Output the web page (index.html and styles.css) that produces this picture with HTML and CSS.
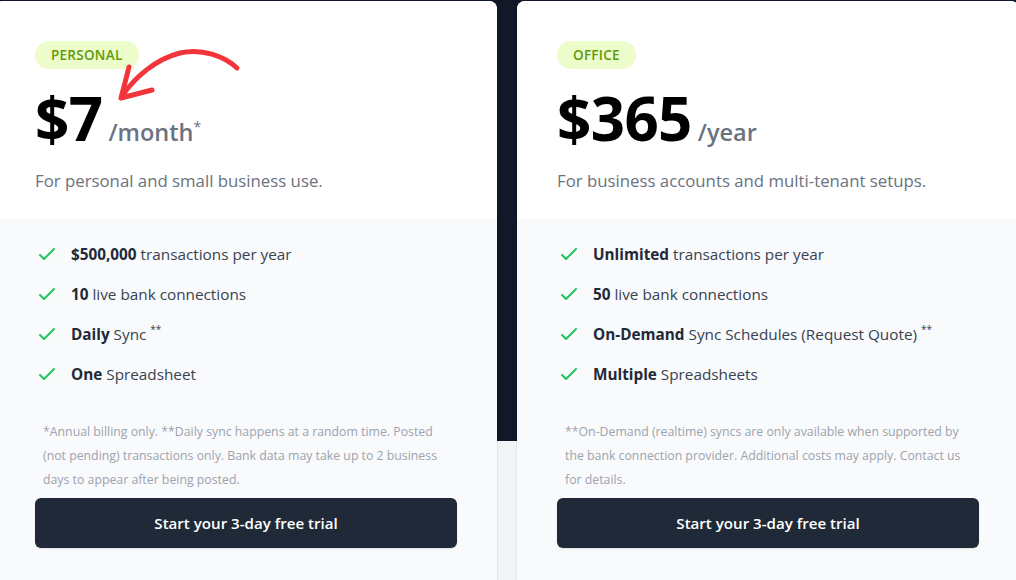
FILE: index.html
```html
<!DOCTYPE html>
<html lang="en">
<head>
<meta charset="utf-8">
<title>Pricing</title>
<link rel="stylesheet" href="styles.css">
</head>
<body>
<div class="plans">
  <section class="card">
    <div class="card-top">
      <span class="badge">Personal</span>
      <div class="price"><span class="amount">$7</span><span class="period">/month<sup>*</sup></span></div>
      <p class="desc">For personal and small business use.</p>
      <svg class="arrow" width="140" height="80" viewBox="0 0 140 80" aria-hidden="true">
        <path d="M135 35 C 122 23, 100 15, 78 20 C 54 26, 33 44, 20 63" fill="none" stroke="#f3343b" stroke-width="5" stroke-linecap="round"/>
        <path d="M27 34 L 19 65 L 50 57" fill="none" stroke="#f3343b" stroke-width="5" stroke-linecap="round" stroke-linejoin="round"/>
      </svg>
    </div>
    <div class="card-bottom">
      <ul class="features">
        <li><svg class="check" viewBox="0 0 24 24"><path d="M5 13l4 4L19 7"/></svg><span><b>$500,000</b> transactions per year</span></li>
        <li><svg class="check" viewBox="0 0 24 24"><path d="M5 13l4 4L19 7"/></svg><span><b>10</b> live bank connections</span></li>
        <li><svg class="check" viewBox="0 0 24 24"><path d="M5 13l4 4L19 7"/></svg><span><b>Daily</b> Sync <sup>**</sup></span></li>
        <li><svg class="check" viewBox="0 0 24 24"><path d="M5 13l4 4L19 7"/></svg><span><b>One</b> Spreadsheet</span></li>
      </ul>
      <p class="note">*Annual billing only. **Daily sync happens at a random time. Posted (not pending) transactions only. Bank data may take up to 2 business days to appear after being posted.</p>
      <a class="cta" href="#">Start your 3-day free trial</a>
    </div>
  </section>
  <section class="card">
    <div class="card-top">
      <span class="badge">Office</span>
      <div class="price"><span class="amount">$365</span><span class="period">/year</span></div>
      <p class="desc">For business accounts and multi-tenant setups.</p>
    </div>
    <div class="card-bottom">
      <ul class="features">
        <li><svg class="check" viewBox="0 0 24 24"><path d="M5 13l4 4L19 7"/></svg><span><b>Unlimited</b> transactions per year</span></li>
        <li><svg class="check" viewBox="0 0 24 24"><path d="M5 13l4 4L19 7"/></svg><span><b>50</b> live bank connections</span></li>
        <li><svg class="check" viewBox="0 0 24 24"><path d="M5 13l4 4L19 7"/></svg><span><b>On-Demand</b> Sync Schedules (Request Quote) <sup>**</sup></span></li>
        <li><svg class="check" viewBox="0 0 24 24"><path d="M5 13l4 4L19 7"/></svg><span><b>Multiple</b> Spreadsheets</span></li>
      </ul>
      <p class="note">**On-Demand (realtime) syncs are only available when supported by the bank connection provider. Additional costs may apply. Contact us for details.</p>
      <a class="cta" href="#">Start your 3-day free trial</a>
    </div>
  </section>
</div>
</body>
</html>
```

FILE: styles.css
```css
* { box-sizing: border-box; }
html, body { margin: 0; padding: 0; }
body {
  font-family: "Open Sans", "Noto Sans", sans-serif;
  background: linear-gradient(#111827 0, #111827 441px, #f3f4f6 441px);
  min-height: 580px;
  overflow: hidden;
}
.plans {
  display: grid;
  grid-template-columns: 502px 502px;
  gap: 20px;
  margin-left: -5px;
  padding-top: 1px;
}
.card {
  background: #fff;
  border-radius: 8px;
  overflow: hidden;
  box-shadow: 0 1px 3px rgba(0,0,0,0.1), 0 1px 2px rgba(0,0,0,0.06);
  display: flex;
  flex-direction: column;
}
.card-top {
  position: relative;
  padding: 40px 40px 24px;
  background: #fff;
}
.badge {
  display: inline-block;
  height: 28px;
  line-height: 28px;
  padding: 0 16px;
  border-radius: 999px;
  background: #ecfccb;
  color: #5f9a0c;
  font-size: 13.5px;
  font-weight: 600;
  letter-spacing: 0.02em;
  text-transform: uppercase;
}
.price {
  display: flex;
  align-items: baseline;
  margin-top: 19px;
  color: #000;
}
.amount {
  font-size: 60px;
  font-weight: 700;
  line-height: 60px;
  letter-spacing: -0.01em;
}
.period {
  margin-left: 6px;
  font-size: 23.5px;
  font-weight: 600;
  color: #6b7280;
}
.period sup { font-size: 14px; font-weight: 500; line-height: 0; }
.desc {
  margin: 19px 0 0;
  font-size: 16.8px;
  line-height: 28px;
  color: #6b7280;
}
.arrow {
  position: absolute;
  left: 107px;
  top: 32px;
  overflow: visible;
}
.card-bottom {
  flex: 1;
  background: #f9fafb;
  padding: 23px 40px 40px;
}
.features {
  list-style: none;
  margin: 0;
  padding: 0;
  display: flex;
  flex-direction: column;
  gap: 16px;
}
.features li {
  display: flex;
  align-items: center;
  gap: 12px;
  height: 24px;
  font-size: 15.3px;
  line-height: 24px;
  color: #374151;
}
.features b { font-weight: 700; color: #1f2937; }
.features sup {
  font-size: 10px;
  line-height: 0;
  vertical-align: 0;
  position: relative;
  top: -7px;
}
.check {
  width: 24px;
  height: 24px;
  flex: none;
  fill: none;
  stroke: #22c55e;
  stroke-width: 2;
  stroke-linecap: round;
  stroke-linejoin: round;
}
.note {
  margin: 34px 0 0;
  padding: 0 8px;
  font-size: 12.3px;
  line-height: 24px;
  color: #9ca3af;
}
.cta {
  display: flex;
  align-items: center;
  justify-content: center;
  margin-top: 6px;
  height: 50px;
  border-radius: 6px;
  background: #1f2937;
  color: #fff;
  font-size: 15.1px;
  font-weight: 600;
  text-decoration: none;
  box-shadow: 0 1px 2px rgba(0,0,0,0.1);
}
```
